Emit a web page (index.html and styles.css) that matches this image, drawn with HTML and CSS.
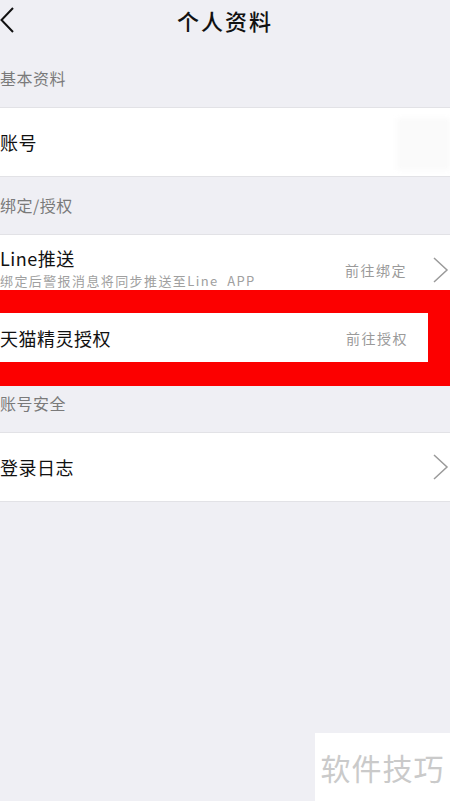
FILE: index.html
```html
<!DOCTYPE html>
<html lang="zh-CN">
<head>
    <meta charset="UTF-8">
    <meta name="viewport" content="width=device-width, initial-scale=1.0">
    <title>个人资料</title>
    <link rel="stylesheet" href="styles.css">
</head>
<body>
    <div class="page">
        <div class="header">
            <svg class="back" width="14" height="26" viewBox="0 0 14 26">
                <polyline points="13,1 1.5,13 13,25" fill="none" stroke="#111" stroke-width="2"/>
            </svg>
            <h1 class="title">个人资料</h1>
        </div>

        <div class="section-label">基本资料</div>
        <div class="row row-account">
            <span class="row-title">账号</span>
            <div class="blur-box"></div>
        </div>

        <div class="section-label">绑定/授权</div>
        <div class="row row-line">
            <div class="row-text">
                <span class="row-title">Line推送</span>
                <span class="row-sub">绑定后警报消息将同步推送至Line&nbsp; APP</span>
            </div>
            <span class="row-hint">前往绑定</span>
            <svg class="chevron" width="16" height="26" viewBox="0 0 16 26">
                <polyline points="1,1 14,13 1,25" fill="none" stroke="#9a9a9a" stroke-width="1.5"/>
            </svg>
        </div>

        <div class="mark">
            <div class="row row-marked">
                <span class="row-title">天猫精灵授权</span>
                <span class="row-hint">前往授权</span>
            </div>
        </div>

        <div class="section-label section-short">账号安全</div>
        <div class="row row-log">
            <span class="row-title">登录日志</span>
            <svg class="chevron" width="16" height="26" viewBox="0 0 16 26">
                <polyline points="1,1 14,13 1,25" fill="none" stroke="#9a9a9a" stroke-width="1.5"/>
            </svg>
        </div>

        <div class="watermark">软件技巧</div>
    </div>
</body>
</html>
```

FILE: styles.css
```css
body {
    margin: 0;
    padding: 0;
    background-color: #efeff4;
    font-family: "Noto Sans CJK SC", "Noto Sans", sans-serif;
    color: #111;
}

.page {
    position: relative;
    width: 450px;
    height: 801px;
    overflow: hidden;
}

.header {
    position: relative;
    height: 50px;
    display: flex;
    justify-content: center;
}

.back {
    position: absolute;
    left: 0;
    top: 7px;
}

.title {
    margin: 0;
    font-size: 22px;
    font-weight: 500;
    letter-spacing: 2px;
    line-height: 40px;
}

.section-label {
    height: 57px;
    line-height: 57px;
    font-size: 16px;
    color: #7a7a7a;
    letter-spacing: 0.5px;
}

.section-short {
    height: 46px;
    line-height: 34px;
}

.row {
    position: relative;
    display: flex;
    align-items: center;
    background-color: #fff;
    border-top: 1px solid #e2e2e6;
    border-bottom: 1px solid #e2e2e6;
}

.row-title {
    font-size: 18px;
    letter-spacing: 0.5px;
}

.row-account {
    height: 68px;
}

.blur-box {
    position: absolute;
    right: 0;
    top: 10px;
    width: 53px;
    height: 52px;
    background-color: #fafafa;
    filter: blur(2px);
}

.row-line {
    height: 55px;
    border-bottom: none;
    align-items: flex-start;
}

.row-text {
    display: flex;
    flex-direction: column;
    flex: 1;
    padding-top: 11px;
}

.row-line .row-title {
    line-height: 25px;
}

.row-sub {
    font-size: 13px;
    color: #a0a0a0;
    line-height: 20px;
    letter-spacing: 1.4px;
}

.row-hint {
    font-size: 14px;
    color: #9a9a9a;
    letter-spacing: 1.5px;
    margin-right: 20px;
}

.row-line .row-hint {
    margin-top: 25px;
    margin-right: 26px;
}

.row-line .chevron {
    margin-top: 22px;
    margin-right: 1px;
}

.mark {
    background-color: #fc0000;
    padding: 23px 22px 24px 0;
}

.row-marked {
    height: 49px;
    border: none;
    justify-content: space-between;
}

.row-log {
    height: 68px;
    justify-content: space-between;
}

.row-log .chevron {
    margin-right: 1px;
}

.watermark {
    position: absolute;
    right: 0;
    bottom: 0;
    width: 135px;
    height: 68px;
    background-color: #fff;
    color: #cacaca;
    font-size: 30px;
    line-height: 68px;
    text-align: center;
    letter-spacing: 1px;
}
```
